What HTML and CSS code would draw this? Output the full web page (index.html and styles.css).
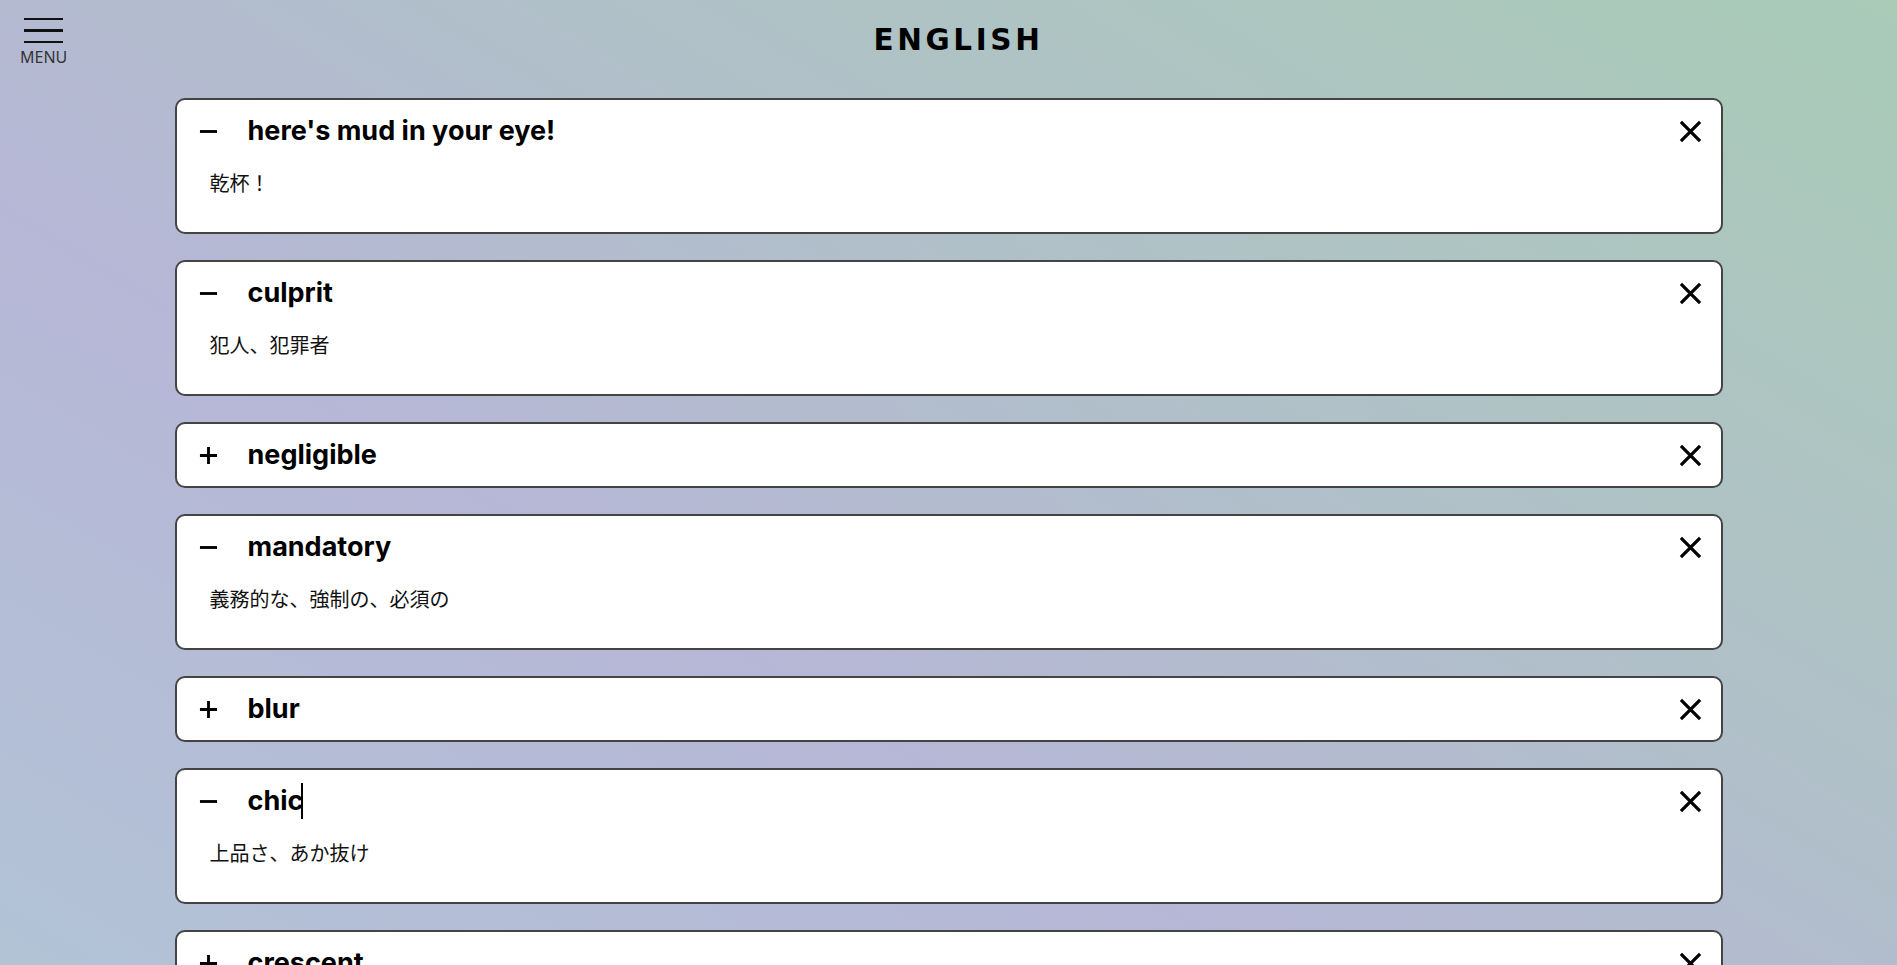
FILE: index.html
```html
<!DOCTYPE html>
<html lang="ja">
<head>
<meta charset="utf-8">
<title>ENGLISH</title>
<link rel="stylesheet" href="styles.css">
</head>
<body>
<header class="top">
  <button class="menu" type="button">
    <span class="menu-lines"><span></span><span></span><span></span></span>
    <span class="menu-label">MENU</span>
  </button>
  <h1 class="page-title">ENGLISH</h1>
</header>
<main class="list">
  <section class="card open">
    <div class="card-head">
      <svg class="toggle" viewBox="0 0 20 20"><path d="M1 10H19"/></svg>
      <span class="word">here's mud in your eye!</span>
      <svg class="close" viewBox="0 0 24 24"><path d="M2 2L22 22M22 2L2 22"/></svg>
    </div>
    <div class="card-body">乾杯！</div>
  </section>
  <section class="card open">
    <div class="card-head">
      <svg class="toggle" viewBox="0 0 20 20"><path d="M1 10H19"/></svg>
      <span class="word">culprit</span>
      <svg class="close" viewBox="0 0 24 24"><path d="M2 2L22 22M22 2L2 22"/></svg>
    </div>
    <div class="card-body">犯人、犯罪者</div>
  </section>
  <section class="card">
    <div class="card-head">
      <svg class="toggle" viewBox="0 0 20 20"><path d="M1 10H19M10 1V19"/></svg>
      <span class="word">negligible</span>
      <svg class="close" viewBox="0 0 24 24"><path d="M2 2L22 22M22 2L2 22"/></svg>
    </div>
  </section>
  <section class="card open">
    <div class="card-head">
      <svg class="toggle" viewBox="0 0 20 20"><path d="M1 10H19"/></svg>
      <span class="word">mandatory</span>
      <svg class="close" viewBox="0 0 24 24"><path d="M2 2L22 22M22 2L2 22"/></svg>
    </div>
    <div class="card-body">義務的な、強制の、必須の</div>
  </section>
  <section class="card">
    <div class="card-head">
      <svg class="toggle" viewBox="0 0 20 20"><path d="M1 10H19M10 1V19"/></svg>
      <span class="word">blur</span>
      <svg class="close" viewBox="0 0 24 24"><path d="M2 2L22 22M22 2L2 22"/></svg>
    </div>
  </section>
  <section class="card open">
    <div class="card-head">
      <svg class="toggle" viewBox="0 0 20 20"><path d="M1 10H19"/></svg>
      <span class="word">chic<span class="caret"></span></span>
      <svg class="close" viewBox="0 0 24 24"><path d="M2 2L22 22M22 2L2 22"/></svg>
    </div>
    <div class="card-body">上品さ、あか抜け</div>
  </section>
  <section class="card">
    <div class="card-head">
      <svg class="toggle" viewBox="0 0 20 20"><path d="M1 10H19M10 1V19"/></svg>
      <span class="word">crescent</span>
      <svg class="close" viewBox="0 0 24 24"><path d="M2 2L22 22M22 2L2 22"/></svg>
    </div>
  </section>
</main>
</body>
</html>
```
FILE: styles.css
```css
html, body {
  margin: 0;
  padding: 0;
}
body {
  min-height: 100vh;
  font-family: "Inter", "Noto Sans CJK JP", sans-serif;
  color: #000;
  background: linear-gradient(31deg, #b2c3d6 0%, #b6b7d6 36%, #b0c0c8 62%, #a9cbb7 100%) fixed;
}
.top {
  position: relative;
  height: 78px;
  display: flex;
  align-items: center;
  justify-content: center;
}
.menu {
  position: absolute;
  left: 20px;
  top: 18px;
  border: 0;
  background: none;
  padding: 0;
  display: flex;
  flex-direction: column;
  align-items: center;
  cursor: pointer;
}
.menu-lines {
  display: flex;
  flex-direction: column;
  gap: 9px;
  width: 39px;
}
.menu-lines span {
  display: block;
  height: 2px;
  background: #111;
}
.menu-lines span:nth-child(2) {
  height: 3px;
}
.menu-label {
  margin-top: 6px;
  font-family: "Noto Sans", sans-serif;
  font-size: 16px;
  line-height: 17px;
  color: #333;
}
.page-title {
  margin: 2px 0 0 20px;
  font-family: "DejaVu Sans", sans-serif;
  font-size: 29.5px;
  font-weight: 700;
  letter-spacing: 3.6px;
}
.list {
  width: 1548px;
  margin: 20px auto 0;
  display: flex;
  flex-direction: column;
  gap: 26px;
  padding-bottom: 40px;
}
.card {
  background: #fff;
  border: 2px solid #444;
  border-radius: 10px;
}
.card-head {
  height: 62px;
  display: flex;
  align-items: center;
  padding: 0 19px 0 22px;
}
.toggle {
  width: 19px;
  height: 19px;
  fill: none;
  stroke: #000;
  stroke-width: 3;
  flex: none;
}
.word {
  margin-left: 30px;
  flex: 1;
  font-size: 27px;
  font-weight: 700;
  line-height: 36px;
  position: relative;
}
.caret {
  display: inline-block;
  width: 2px;
  height: 36px;
  background: #000;
  vertical-align: top;
  margin-left: -2px;
}
.close {
  width: 23px;
  height: 23px;
  fill: none;
  stroke: #000;
  stroke-width: 3.4;
  flex: none;
}
.card-body {
  padding: 6px 0 34px 33px;
  font-family: "Noto Sans CJK JP", sans-serif;
  font-size: 20px;
  line-height: 30px;
  color: #111;
}
```
